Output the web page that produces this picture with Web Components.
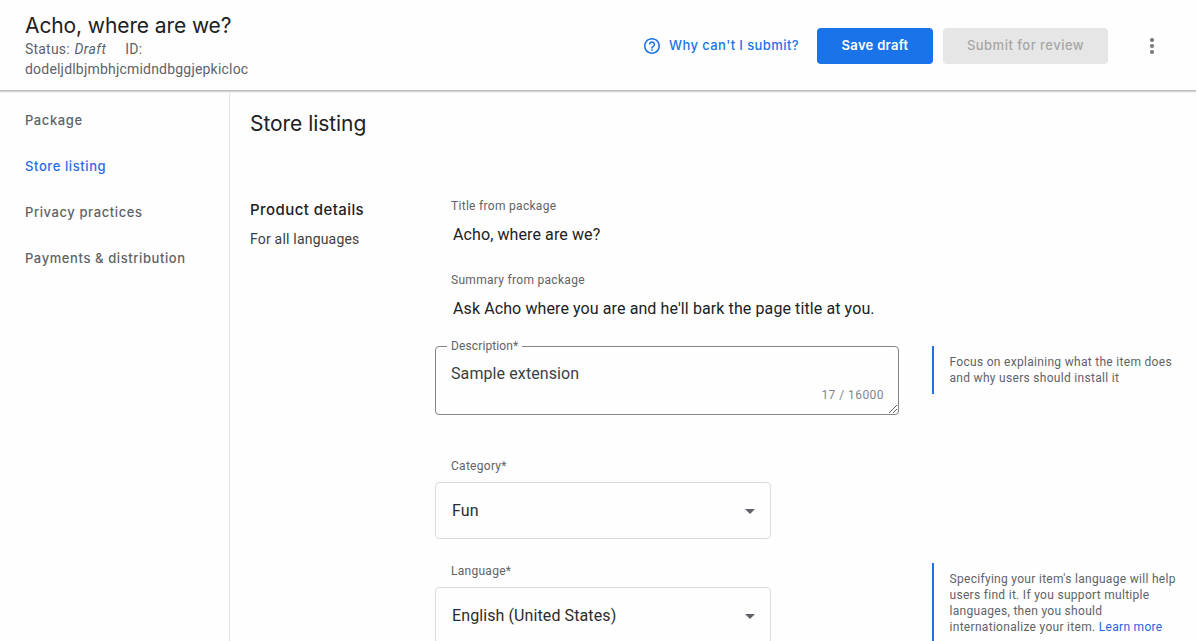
<!DOCTYPE html>
<html lang="en">
<head>
<meta charset="utf-8">
<title>Store listing</title>
<style>
html,body{margin:0;height:100%;overflow:hidden;background:#fefefe}
body{font-family:Roboto,"Liberation Sans",sans-serif;color:#202124}
</style>
</head>
<body>
<dash-page>
  <dash-header slot="header" name="Acho, where are we?" status="Draft" item="dodeljdlbjmbhjcmidndbggjepkicloc">
    <help-link>Why can't I submit?</help-link>
    <dash-button style="--w:116px;--ls:.3px">Save draft</dash-button>
    <dash-button disabled style="--w:165px;--ls:.48px">Submit for review</dash-button>
    <more-menu></more-menu>
  </dash-header>
  <side-nav slot="nav">
    <nav-item>Package</nav-item>
    <nav-item active>Store listing</nav-item>
    <nav-item>Privacy practices</nav-item>
    <nav-item>Payments &amp; distribution</nav-item>
  </side-nav>
  <listing-section heading="Product details" note="For all languages">
    <static-field label="Title from package">Acho, where are we?</static-field>
    <static-field label="Summary from package">Ask Acho where you are and he'll bark the page title at you.</static-field>
    <form-row style="--mt:2px">
      <text-box label="Description*" count="17 / 16000">Sample extension</text-box>
      <hint-note slot="hint">Focus on explaining what the item does<br>and why users should install it</hint-note>
    </form-row>
    <form-row style="--mt:43px"><select-box label="Category*">Fun</select-box></form-row>
    <form-row style="--mt:24px">
      <select-box label="Language*">English (United States)</select-box>
      <hint-note slot="hint">Specifying your item's language will help<br>users find it. If you support multiple<br>languages, then you should<br>internationalize your item. <a>Learn more</a></hint-note>
    </form-row>
  </listing-section>
</dash-page>
<script>
const define = (name, css, html) => customElements.define(name, class extends HTMLElement {
  constructor() {
    super();
    const t = document.createElement('template');
    t.innerHTML = `<style>:host,*{box-sizing:border-box}${css}</style>${html}`;
    this.attachShadow({mode: 'open'}).append(t.content.cloneNode(true));
  }
  connectedCallback() {
    this.shadowRoot.querySelectorAll('[data-attr]').forEach(e => {
      e.textContent = this.getAttribute(e.dataset.attr) || '';
    });
  }
});
const DISPLAY = 'font-family:Inter,Roboto,sans-serif;';

define('dash-page', `
  :host{display:flex;flex-direction:column;height:641px;width:1197px;overflow:hidden}
  .body{display:flex;flex:1;min-height:0}
  main{flex:1;padding:0 0 0 20px;min-width:0}
  h1{margin:20px 0 0;${DISPLAY}font-size:21px;line-height:28px;font-weight:400;letter-spacing:-.05px}`,
  `<slot name="header"></slot><div class="body"><slot name="nav"></slot><main><h1>Store listing</h1><slot></slot></main></div>`);

define('dash-header', `
  :host{display:flex;justify-content:space-between;flex:none;height:90px;background:#fefefe;position:relative;
    box-shadow:0 1px 0 #bcbebe,0 2px 0 #d4d6d6,0 3px 0 #f2f4f4;margin-right:1px}
  .id{padding:12px 0 0 25px;width:270px;font-size:14px;line-height:20px;letter-spacing:.2px;color:#5f6368}
  h2{margin:0;${DISPLAY}font-size:21px;line-height:27px;font-weight:400;color:#202124;letter-spacing:-.1px;white-space:nowrap}
  i{margin:0 19px 0 1px;letter-spacing:.4px}
  .actions{display:flex;align-items:flex-start;padding-top:28px}`,
  `<div class="id"><h2 data-attr="name"></h2><div>Status: <i data-attr="status"></i>ID:</div><div data-attr="item"></div></div>
   <div class="actions"><slot></slot></div>`);

define('help-link', `
  :host{display:flex;align-items:center;height:36px;color:#1a73e8;margin-right:18px;${DISPLAY}font-size:13px;font-weight:500;letter-spacing:.41px;white-space:nowrap}
  svg{margin-right:9px}
  span{padding-bottom:2px}`,
  `<svg width="16" height="16" viewBox="2 2 20 20" fill="currentColor"><path d="M11 18h2v-2h-2v2zm1-16C6.480 2 2 6.480 2 12s4.480 10 10 10 10-4.480 10-10S17.520 2 12 2zm0 18c-4.410 0-8-3.590-8-8s3.590-8 8-8 8 3.590 8 8-3.590 8-8 8zm0-14c-2.210 0-4 1.790-4 4h2c0-1.100.9-2 2-2s2 .9 2 2c0 2-3 1.750-3 5h2c0-2.250 3-2.500 3-5 0-2.210-1.790-4-4-4z"/></svg><span><slot></slot></span>`);

define('dash-button', `
  :host{display:flex;align-items:center;justify-content:center;width:var(--w);height:36px;padding-bottom:2px;border-radius:4px;background:#1a73e8;color:#fff;
    margin-right:10px;${DISPLAY}font-size:13px;font-weight:600;letter-spacing:var(--ls);white-space:nowrap}
  :host([disabled]){background:#e6e6e6;color:#a6a6a6;font-weight:500;margin-right:38px}`,
  `<span><slot></slot></span>`);

define('more-menu', `
  :host{display:flex;align-items:center;height:36px;width:50px}`,
  `<svg width="12" height="18" viewBox="0 0 12 18" fill="#757a7f"><circle cx="6" cy="3" r="2.1"/><circle cx="6" cy="9" r="2.1"/><circle cx="6" cy="15" r="2.1"/></svg>`);

define('side-nav', `
  :host{display:flex;flex-direction:column;flex:none;width:230px;border-right:1px solid #e2e3e5;padding:7px 0 0 25px}`, `<slot></slot>`);

define('nav-item', `
  :host{display:flex;align-items:center;height:46px;${DISPLAY}font-size:13px;font-weight:500;letter-spacing:.59px;color:#5f6368}
  :host([active]){color:#2a6be6}`, `<span><slot></slot></span>`);

define('listing-section', `
  :host{display:flex;margin-top:58px}
  aside{width:185px;flex:none;padding-top:4px}
  h3{margin:0;${DISPLAY}font-size:15px;line-height:20px;font-weight:500;letter-spacing:.43px}
  p{margin:9px 0 0;font-size:14px;line-height:20px;letter-spacing:.2px;color:#3c4043}
  .fields{flex:1}`,
  `<aside><h3 data-attr="heading"></h3><p data-attr="note"></p></aside><div class="fields"><slot></slot></div>`);

define('static-field', `
  :host{display:block;height:74px;padding-left:16px}
  label{display:block;font-size:12px;line-height:16px;letter-spacing:.3px;color:#5f6368;padding-top:2px}
  div{font-size:16px;line-height:24px;letter-spacing:.1px;padding:9px 0 0 2px;white-space:nowrap}`,
  `<label data-attr="label"></label><div><slot></slot></div>`);

define('form-row', `
  :host{display:flex;align-items:flex-start;margin-top:var(--mt)}
  .field{width:497px;flex:none}`,
  `<div class="field"><slot></slot></div><slot name="hint"></slot>`);

define('text-box', `
  :host{display:block;position:relative;width:464px;height:69px;border:1px solid #80868b;border-radius:4px}
  label{position:absolute;left:11px;top:-9px;padding:0 4px;background:#fefefe;font-size:12px;line-height:16px;letter-spacing:.12px;color:#5f6368}
  .value{padding:15px 15px 0;font-size:16px;line-height:24px;color:#3c4043;letter-spacing:.1px}
  .count{padding-right:14px;text-align:right;font-size:12px;line-height:18px;letter-spacing:.45px;color:#80868b}
  svg{position:absolute;right:0;bottom:0}`,
  `<label data-attr="label"></label><div class="value"><slot></slot></div><div class="count" data-attr="count"></div>
   <svg width="10" height="10" viewBox="0 0 10 10" stroke="#555" stroke-width=".9"><path d="M1 9L9 1M5 9L9 5"/></svg>`);

define('select-box', `
  :host{display:block;width:336px}
  label{display:block;padding-left:16px;font-size:12px;line-height:16px;letter-spacing:.28px;color:#5f6368}
  .box{display:flex;align-items:center;justify-content:space-between;height:57px;margin-top:8px;border:1px solid #dadce0;border-radius:4px;padding:0 15px 0 16px;font-size:16px;letter-spacing:.1px;color:#2a2c30}
  svg{margin-top:2px}`,
  `<label data-attr="label"></label><div class="box"><span><slot></slot></span><svg width="10" height="5" viewBox="0 0 10 5" fill="#5f6368"><path d="M0 0h10L5 5z"/></svg></div>`);

define('hint-note', `
  :host{display:block;flex:1;border-left:2px solid #1a73e8;padding:8px 0 8px 15.5px;font-size:12px;line-height:16px;letter-spacing:.3px;color:#5f6368;white-space:nowrap}
  ::slotted(a){color:#2a62e6}`, `<slot></slot>`);
</script>
</body>
</html>
